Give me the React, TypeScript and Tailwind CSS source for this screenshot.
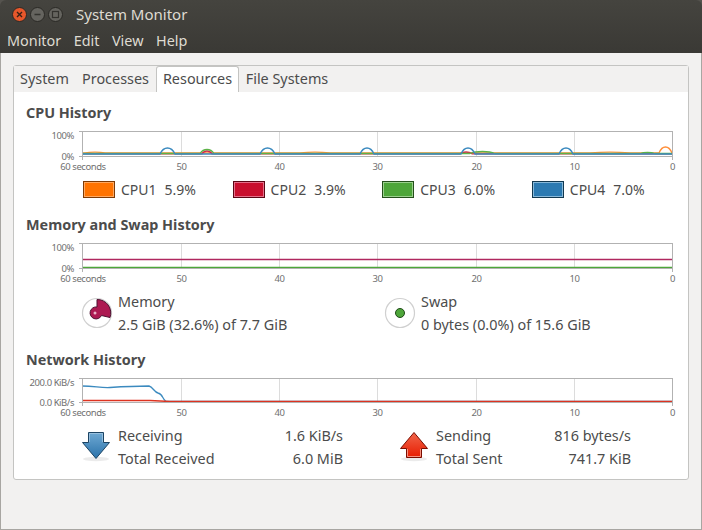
import React from "react";

const font = "[font-family:'Noto_Sans',sans-serif]";
const gridXs = [82, 181, 279, 377, 476, 574, 672];
const gridLabels = ["60 seconds", "50", "40", "30", "20", "10", "0"];

function bumps(base: number, items: Array<[number, number, number]>) {
  // items: start x, width, peak y
  let d = `M82 ${base}`;
  items.forEach(([x, w, peak]) => {
    const ctrl = base + (peak - base) / 0.75;
    d += ` L${x} ${base} C${x + w * 0.25} ${ctrl} ${x + w * 0.75} ${ctrl} ${x + w} ${base}`;
  });
  return d + ` L672 ${base}`;
}

function AxisText(props: { x: number; y: number; anchor: "end" | "middle"; children: string }) {
  return (
    <text
      x={props.x}
      y={props.y}
      textAnchor={props.anchor}
      fontSize={9.5}
      letterSpacing={-0.45}
      fill="#707070"
      fontFamily="Noto Sans"
    >
      {props.children}
    </text>
  );
}

function Graph({
  top,
  bottom,
  yLabels,
  children,
}: {
  top: number;
  bottom: number;
  yLabels: [string, string];
  children: React.ReactNode;
}) {
  const vbTop = top - 5;
  return (
    <svg
      viewBox={`14 ${vbTop} 674 ${bottom - top + 21}`}
      width={674}
      height={bottom - top + 21}
      className="block"
    >
      {gridXs.slice(1, -1).map((x) => (
        <line key={x} x1={x + 0.5} x2={x + 0.5} y1={top} y2={bottom} stroke="#dcdcdc" />
      ))}
      {children}
      <rect x={82.5} y={top + 0.5} width={590} height={bottom - top} fill="none" stroke="#b2b2b2" />
      <line x1={79} x2={82} y1={top + 0.5} y2={top + 0.5} stroke="#b2b2b2" />
      <line x1={79} x2={82} y1={bottom + 0.5} y2={bottom + 0.5} stroke="#b2b2b2" />
      <line x1={82.5} x2={82.5} y1={bottom} y2={bottom + 4} stroke="#b2b2b2" />
      <line x1={672.5} x2={672.5} y1={bottom} y2={bottom + 4} stroke="#b2b2b2" />
      <AxisText x={74} y={top + 8} anchor="end">
        {yLabels[0]}
      </AxisText>
      <AxisText x={74} y={bottom + 4} anchor="end">
        {yLabels[1]}
      </AxisText>
      {gridLabels.map((label, i) => (
        <AxisText key={label} x={i === 0 ? 83 : gridXs[i] + 0.5} y={bottom + 13.5} anchor="middle">
          {label}
        </AxisText>
      ))}
    </svg>
  );
}

function Swatch({ fill, dark, light }: { fill: string; dark: string; light: string }) {
  return (
    <div className="h-[17px] w-8 border" style={{ borderColor: dark }}>
      <div className="h-full w-full border" style={{ background: fill, borderColor: light }} />
    </div>
  );
}

function CpuItem(props: {
  name: string;
  value: string;
  fill: string;
  dark: string;
  light: string;
}) {
  return (
    <div className="flex w-[149.6px] items-center gap-[6px] text-[14px]">
      <Swatch fill={props.fill} dark={props.dark} light={props.light} />
      <span>{props.name}</span>
      <span className="ml-[2px]">{props.value}</span>
    </div>
  );
}

function MemoryPie() {
  return (
    <svg width={32} height={32} viewBox="0 0 32 32" className="shrink-0">
      <circle cx={16} cy={16} r={14.5} fill="#fff" stroke="#d0d0d0" strokeWidth={1.2} />
      <path
        d="M16 2.5 A13.5 13.5 0 0 1 29 20.5 L20.5 18.5 A6 6 0 1 1 16 10 Z"
        fill="#ad1a52"
        stroke="#4d1030"
        strokeWidth={1}
      />
      <circle cx={14} cy={16} r={1.5} fill="#e9b3c8" />
    </svg>
  );
}

function SwapDot() {
  return (
    <svg width={32} height={32} viewBox="0 0 32 32" className="shrink-0">
      <circle cx={16} cy={16} r={14.5} fill="#fff" stroke="#d0d0d0" strokeWidth={1.2} />
      <circle cx={16} cy={16} r={4.5} fill="#4ea63a" stroke="#1f4a18" strokeWidth={1} />
    </svg>
  );
}

function DownArrow() {
  return (
    <svg width={30} height={32} viewBox="0 0 30 32" className="mt-[7px] shrink-0">
      <defs>
        <linearGradient id="blueArrow" x1="0" x2="0" y1="0" y2="1">
          <stop offset="0" stopColor="#6fa9d3" />
          <stop offset="1" stopColor="#2a72aa" />
        </linearGradient>
      </defs>
      <ellipse cx={15} cy={28} rx={13} ry={2.2} fill="#000" opacity={0.08} />
      <path
        d="M7.5 1.5 H22.5 V11.5 H28.5 L15 27.5 L1.5 11.5 H7.5 Z"
        fill="url(#blueArrow)"
        stroke="#1c4463"
        strokeWidth={1}
      />
      <path d="M8.5 11 V2.5 H21.5 V11" fill="none" stroke="#a9cbe4" strokeWidth={1} opacity={0.7} />
    </svg>
  );
}

function UpArrow() {
  return (
    <svg width={30} height={32} viewBox="0 0 30 32" className="mt-[7px] shrink-0">
      <defs>
        <linearGradient id="redArrow" x1="0" x2="0" y1="0" y2="1">
          <stop offset="0" stopColor="#f0654a" />
          <stop offset="1" stopColor="#e81c00" />
        </linearGradient>
      </defs>
      <ellipse cx={15} cy={28} rx={13} ry={2.2} fill="#000" opacity={0.08} />
      <path
        d="M15 1.5 L28.5 17.5 H22.5 V26.5 H7.5 V17.5 H1.5 Z"
        fill="url(#redArrow)"
        stroke="#7a0d00"
        strokeWidth={1}
      />
      <path d="M8.5 18 V25.5 H21.5 V18" fill="none" stroke="#f7917f" strokeWidth={1} />
    </svg>
  );
}

function NetStat(props: {
  label: string;
  value: string;
  totalLabel: string;
  total: string;
  icon: React.ReactNode;
  width: string;
}) {
  return (
    <div className={`flex gap-[7px] ${props.width}`}>
      {props.icon}
      <div className="flex-1 leading-[23px]">
        <div className="flex justify-between">
          <span>{props.label}</span>
          <span>{props.value}</span>
        </div>
        <div className="flex justify-between">
          <span>{props.totalLabel}</span>
          <span>{props.total}</span>
        </div>
      </div>
    </div>
  );
}

function WinButton({ color, children }: { color: string; children: React.ReactNode }) {
  return (
    <div
      className="flex h-[15px] w-[15px] items-center justify-center rounded-full border border-[#2a2925]"
      style={{ background: color }}
    >
      <svg width={9} height={9} viewBox="0 0 9 9">
        {children}
      </svg>
    </div>
  );
}

function Heading({ children }: { children: React.ReactNode }) {
  return <h3 className="pl-3 text-[14.4px] leading-[18px] font-bold text-[#4c4c4c]">{children}</h3>;
}

export default function App() {
  const tabs = ["System", "Processes", "Resources", "File Systems"];
  const tabWidths = ["w-[61px]", "w-[81px]", "w-[83px]", "w-[96px]"];

  return (
    <div className={`h-[530px] w-[702px] overflow-hidden bg-[#55534e] ${font} text-[14.4px] text-[#4c4c4c]`}>
      <div className="overflow-hidden rounded-t-[6px]">
        <div className="h-[53px] bg-gradient-to-b from-[#45443f] to-[#3a3935] text-[#dfdbd2]">
          <div className="flex h-[29px] items-center pl-3">
            <div className="flex items-center gap-[3px]">
              <WinButton color="#e8572b">
                <path d="M2 2 L7 7 M7 2 L2 7" stroke="#3a2015" strokeWidth={1.4} />
              </WinButton>
              <WinButton color="#65645f">
                <path d="M1.5 4.5 H7.5" stroke="#33322e" strokeWidth={1.4} />
              </WinButton>
              <WinButton color="#65645f">
                <rect x={1.5} y={1.5} width={6} height={6} fill="none" stroke="#33322e" strokeWidth={1.2} />
              </WinButton>
            </div>
            <span className="ml-[13px] text-[15px]">System Monitor</span>
          </div>
          <div className="flex h-[24px] items-center gap-[12.5px] pl-[7px]">
            <span>Monitor</span>
            <span>Edit</span>
            <span>View</span>
            <span>Help</span>
          </div>
        </div>

        <div className="h-[477px] border-x border-b border-[#a8a6a2] bg-[#f2f1f0] px-[12px] pt-[12px]">
          <div className="h-[415px] rounded-[3px] border border-[#c4c4c2] bg-white">
            <div className="flex h-[26px] bg-[#f2f1f0]">
              {tabs.map((tab, i) => (
                <div
                  key={tab}
                  className={`flex items-center justify-center pb-px ${tabWidths[i]} ${
                    tab === "Resources"
                      ? "rounded-t-[3px] border-x border-t border-[#c4c4c2] bg-white"
                      : ""
                  }`}
                >
                  {tab}
                </div>
              ))}
            </div>

            <div className="pt-3">
              <Heading>CPU History</Heading>
              <div className="mt-1">
                <Graph top={131} bottom={156} yLabels={["100%", "0%"]}>
                  <g fill="none" strokeWidth={1.3}>
                    <path
                      d={bumps(153, [[85, 20, 152.2], [300, 30, 152.3], [590, 40, 152.4], [659, 13, 147]])}
                      stroke="#ff8f3a"
                    />
                    <path d={bumps(153.8, [[202, 10, 151], [460, 12, 152]])} stroke="#d42a48" />
                    <path d={bumps(153.5, [[200, 14, 149.5], [470, 25, 151.5], [640, 15, 152.5]])} stroke="#5cb348" />
                    <path
                      d={bumps(154, [
                        [160, 15, 148],
                        [260, 15, 148],
                        [360, 14, 148],
                        [461, 14, 148],
                        [559, 14, 148],
                      ])}
                      stroke="#3b8abf"
                    />
                  </g>
                </Graph>
              </div>
              <div className="mt-2 flex h-[19px] pl-[69px] text-[#4c4c4c]">
                <CpuItem name="CPU1" value="5.9%" fill="#ff7300" dark="#7d3a05" light="#ffa860" />
                <CpuItem name="CPU2" value="3.9%" fill="#c90f2e" dark="#5a0614" light="#e4708a" />
                <CpuItem name="CPU3" value="6.0%" fill="#4ea63a" dark="#244f1b" light="#9bd08e" />
                <CpuItem name="CPU4" value="7.0%" fill="#2c7ab2" dark="#123850" light="#88b9da" />
              </div>
            </div>

            <div className="pt-[17px]">
              <Heading>Memory and Swap History</Heading>
              <div className="mt-1">
                <Graph top={243} bottom={268} yLabels={["100%", "0%"]}>
                  <line x1={82} x2={672} y1={259.6} y2={259.6} stroke="#b0285f" strokeWidth={1.5} />
                  <line x1={82} x2={672} y1={267.6} y2={267.6} stroke="#4ea63a" strokeWidth={1.5} />
                </Graph>
              </div>
              <div className="mt-[6px] flex pl-[67px] leading-[23px]">
                <div className="flex w-[303px] items-center gap-[5px]">
                  <MemoryPie />
                  <div>
                    <div>Memory</div>
                    <div>2.5 GiB (32.6%) of 7.7 GiB</div>
                  </div>
                </div>
                <div className="flex items-center gap-[5px]">
                  <SwapDot />
                  <div>
                    <div>Swap</div>
                    <div>0 bytes (0.0%) of 15.6 GiB</div>
                  </div>
                </div>
              </div>
            </div>

            <div className="pt-[15px]">
              <Heading>Network History</Heading>
              <div className="mt-1">
                <Graph top={378} bottom={402} yLabels={["200.0 KiB/s", "0.0 KiB/s"]}>
                  <path
                    d="M82 386 C95 386 100 388 110 387.5 C125 386.5 140 386 149 386 C153 387 154 392 158 393 C163 394 162 399 166 401.5 L672 401.5"
                    fill="none"
                    stroke="#3b8abf"
                    strokeWidth={1.3}
                  />
                  <path d="M82 400.5 L150 400.5 L170 401.5 L672 401.5" fill="none" stroke="#dd3320" strokeWidth={1.3} />
                </Graph>
              </div>
              <div className="mt-[6px] flex pl-[67px]">
                <NetStat
                  width="w-[262px] mr-[56px]"
                  label="Receiving"
                  value="1.6 KiB/s"
                  totalLabel="Total Received"
                  total="6.0 MiB"
                  icon={<DownArrow />}
                />
                <NetStat
                  width="w-[232px]"
                  label="Sending"
                  value="816 bytes/s"
                  totalLabel="Total Sent"
                  total="741.7 KiB"
                  icon={<UpArrow />}
                />
              </div>
            </div>
          </div>
        </div>
      </div>
    </div>
  );
}
